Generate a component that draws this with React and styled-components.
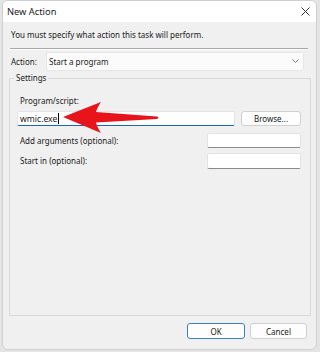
import React from 'react';
import styled, { createGlobalStyle } from 'styled-components';

const GlobalStyle = createGlobalStyle`
  html, body {
    margin: 0;
    padding: 0;
    background: #e4e4e4;
  }
  body {
    font-family: 'Noto Sans', 'Open Sans', sans-serif;
    font-size: 8px;
    color: #1a1a1a;
  }
`;

const Stage = styled.div`
  position: relative;
  width: 320px;
  height: 352px;
  overflow: hidden;
  padding-left: 2px;
  box-sizing: border-box;
`;

const Window = styled.div`
  width: 315px;
  height: 350px;
  box-sizing: border-box;
  display: flex;
  flex-direction: column;
  background: #f0f0f0;
  border: 1px solid #cfcfcf;
  border-radius: 6px;
  overflow: hidden;
`;

const TitleBar = styled.div`
  height: 21px;
  flex: none;
  display: flex;
  align-items: center;
  justify-content: space-between;
  background: #ffffff;
  padding: 0 6px 0 4px;
  font-size: 9.3px;
  color: #1b1b1b;
`;

const CloseIcon = styled.svg`
  width: 9px;
  height: 9px;
  stroke: #333;
  stroke-width: 1;
`;

const Body = styled.div`
  flex: 1;
  display: flex;
  flex-direction: column;
  padding: 0 5px 0 6px;
`;

const Intro = styled.div`
  margin-top: 6px;
  margin-left: 2px;
  line-height: 14px;
`;

const Separator = styled.div`
  margin: 6px 3px 0 1px;
  height: 1px;
  background: #a8a8a8;
  box-shadow: 0 1px 0 #ffffff;
`;

const ActionRow = styled.div`
  display: flex;
  align-items: center;
  margin-top: 3px;
  margin-left: 2px;
  height: 18px;
`;

const ActionLabel = styled.span`
  width: 35px;
  flex: none;
`;

const Dropdown = styled.div`
  flex: 1;
  margin-right: 7px;
  height: 17px;
  display: flex;
  align-items: center;
  justify-content: space-between;
  padding: 0 4px 0 2px;
  background: #fbfbfb;
  border: 1px solid #e6e6e6;
  border-radius: 2px;
`;

const Chevron = styled.svg`
  width: 7px;
  height: 4px;
  stroke: #777;
  stroke-width: 1;
  fill: none;
`;

const Group = styled.fieldset`
  flex: 1;
  margin: 1px 0 0 0;
  padding: 0;
  border: 1px solid #d9d9d9;
  display: flex;
  flex-direction: column;
  min-width: 0;
`;

const Legend = styled.legend`
  margin-left: 4px;
  padding: 0 2px;
  line-height: 14px;
`;

const GroupInner = styled.div`
  display: flex;
  flex-direction: column;
  padding: 9px 9px 0 7px;
`;

const FieldLabel = styled.div`
  padding-left: 3px;
  line-height: 14px;
`;

const Row = styled.div`
  display: flex;
  align-items: center;
  justify-content: space-between;
  margin-top: ${p => p.$gap || 0}px;
`;

const TextBox = styled.div`
  box-sizing: border-box;
  width: ${p => p.$w}px;
  height: ${p => p.$h || 15}px;
  background: #ffffff;
  border: 1px solid #e4e4e4;
  border-bottom: 1px solid ${p => (p.$focus ? '#1667c0' : '#8a8a8a')};
  border-radius: 2px;
  display: flex;
  align-items: center;
  padding-left: 2px;
  line-height: 14px;
  font-size: 8.6px;
`;

const Caret = styled.span`
  display: inline-block;
  width: 1px;
  height: 11px;
  background: #000;
  margin-left: 1px;
`;

const Button = styled.div`
  box-sizing: border-box;
  width: ${p => p.$w}px;
  height: ${p => p.$h || 16}px;
  display: flex;
  align-items: center;
  justify-content: center;
  background: #fdfdfd;
  border: 1px solid ${p => (p.$primary ? '#3a7fd0' : '#d0d0d0')};
  border-radius: 3px;
`;

const Footer = styled.div`
  flex: none;
  display: flex;
  justify-content: flex-end;
  gap: 5px;
  padding: 7px 9px 10px 0;
`;

const Arrow = styled.svg`
  position: absolute;
  left: 0;
  top: 0;
  width: 320px;
  height: 352px;
  pointer-events: none;
`;

export default function App() {
  return (
    <Stage>
      <GlobalStyle />
      <Window>
        <TitleBar>
          <span>New Action</span>
          <CloseIcon viewBox="0 0 9 9">
            <path d="M0.5 0.5 L8.5 8.5 M8.5 0.5 L0.5 8.5" />
          </CloseIcon>
        </TitleBar>
        <Body>
          <Intro>You must specify what action this task will perform.</Intro>
          <Separator />
          <ActionRow>
            <ActionLabel>Action:</ActionLabel>
            <Dropdown>
              <span>Start a program</span>
              <Chevron viewBox="0 0 7 4">
                <path d="M0.5 0.5 L3.5 3.5 L6.5 0.5" />
              </Chevron>
            </Dropdown>
          </ActionRow>
          <Group>
            <Legend>Settings</Legend>
            <GroupInner>
              <FieldLabel>Program/script:</FieldLabel>
              <Row $gap={3}>
                <TextBox $w={218} $focus>
                  wmic.exe<Caret />
                </TextBox>
                <Button $w={60} $h={15}>Browse...</Button>
              </Row>
              <Row $gap={7}>
                <FieldLabel>Add arguments (optional):</FieldLabel>
                <TextBox $w={94} />
              </Row>
              <Row $gap={5}>
                <FieldLabel>Start in (optional):</FieldLabel>
                <TextBox $w={94} $h={16} />
              </Row>
            </GroupInner>
          </Group>
        </Body>
        <Footer>
          <Button $w={58} $primary>OK</Button>
          <Button $w={57}>Cancel</Button>
        </Footer>
      </Window>
      <Arrow viewBox="0 0 320 352">
        <path
          fill="#e8141c"
          d="M63 117 L101 102 Q97 108 96 112 L157 116.5 Q160 117.5 157 119 L96 122.5 Q97 127 101 133 Z"
        />
      </Arrow>
    </Stage>
  );
}
